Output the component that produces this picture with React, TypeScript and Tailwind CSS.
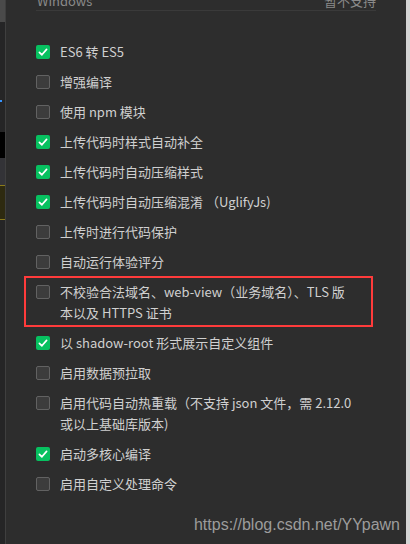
import React from 'react';

type Option = {
  lines: string[];
  checked: boolean;
  marked?: boolean;
};

const OPTIONS: Option[] = [
  { lines: ['ES6 转 ES5'], checked: true },
  { lines: ['增强编译'], checked: false },
  { lines: ['使用 npm 模块'], checked: false },
  { lines: ['上传代码时样式自动补全'], checked: true },
  { lines: ['上传代码时自动压缩样式'], checked: true },
  { lines: ['上传代码时自动压缩混淆 （UglifyJs)'], checked: true },
  { lines: ['上传时进行代码保护'], checked: false },
  { lines: ['自动运行体验评分'], checked: false },
  {
    lines: ['不校验合法域名、web-view（业务域名）、TLS 版', '本以及 HTTPS 证书'],
    checked: false,
    marked: true,
  },
  { lines: ['以 shadow-root 形式展示自定义组件'], checked: true },
  { lines: ['启用数据预拉取'], checked: false },
  { lines: ['启用代码自动热重载（不支持 json 文件，需 2.12.0', '或以上基础库版本)'], checked: false },
  { lines: ['启动多核心编译'], checked: true },
  { lines: ['启用自定义处理命令'], checked: false },
];

const Checkbox: React.FC<{ checked: boolean }> = ({ checked }) =>
  checked ? (
    <span className="mt-[3.5px] flex h-[14px] w-[14px] shrink-0 items-center justify-center rounded-[2px] bg-[#07c160]">
      <svg viewBox="0 0 14 14" className="h-[14px] w-[14px]" aria-hidden>
        <path d="M3.4 7.3 L5.9 9.8 L10.6 4.4" fill="none" stroke="#fff" strokeWidth="1.7" strokeLinecap="round" strokeLinejoin="round" />
      </svg>
    </span>
  ) : (
    <span className="mt-[3.5px] h-[14px] w-[14px] shrink-0 rounded-[2px] border border-[#626262] bg-[#3c3c3c]" />
  );

export default function App() {
  return (
    <div
      className="flex h-[544px] w-[410px] overflow-hidden bg-[#2d2d2d]"
      style={{ fontFamily: '"Noto Sans CJK SC", "Microsoft YaHei", sans-serif' }}
    >
      {/* sliver of the neighbouring editor on the left */}
      <div className="flex w-[5px] shrink-0 flex-col bg-[#252526]">
        <div className="h-[22px] bg-[#4a4a4a]" />
        <div className="h-[78px]" />
        <div className="h-[2px] w-[2px] bg-[#3794ff]" />
        <div className="h-[30px]" />
        <div className="h-[26px] bg-black" />
        <div className="h-[27px] bg-[#333337]" />
        <div className="h-[35px] border-y border-[#8a7a1c] bg-[#2e2a10]" />
      </div>
      <div className="w-px shrink-0 bg-[#3f3f3f]" />

      <div className="relative flex min-w-0 flex-1 flex-col pl-[30px] pr-[30px]">
        <div className="-mt-[7px] flex justify-between border-b border-[#3a3a3a] pb-[2px] text-[13px] leading-[15px] text-[#8a8a8a]">
          <span className="pl-px">Windows</span>
          <span>暂不支持</span>
        </div>

        <ul className="mt-[30px] flex flex-col gap-[9px] text-[13px] leading-[21px] text-[#d0d0d0]">
          {OPTIONS.map((o) => (
            <li key={o.lines[0]} className="relative flex items-start gap-[10px]">
              <Checkbox checked={o.checked} />
              <span className="whitespace-nowrap">
                {o.lines.map((l, i) => (
                  <React.Fragment key={l}>
                    {i > 0 && <br />}
                    {l}
                  </React.Fragment>
                ))}
              </span>
              {o.marked && (
                <span className="pointer-events-none absolute -top-[5.5px] -bottom-[3.5px] -left-[12px] right-[3px] border-2 border-[#ff3b3b]" />
              )}
            </li>
          ))}
        </ul>

        <span
          className="absolute bottom-[9px] right-[6px] text-[16px] leading-[20px] text-[#9c9c9c]"
          style={{ fontFamily: '"Liberation Sans", Arial, sans-serif' }}
        >
          https://blog.csdn.net/YYpawn
        </span>
      </div>

      <div className="w-[4px] shrink-0 bg-[#d4d4d4]" />
    </div>
  );
}
